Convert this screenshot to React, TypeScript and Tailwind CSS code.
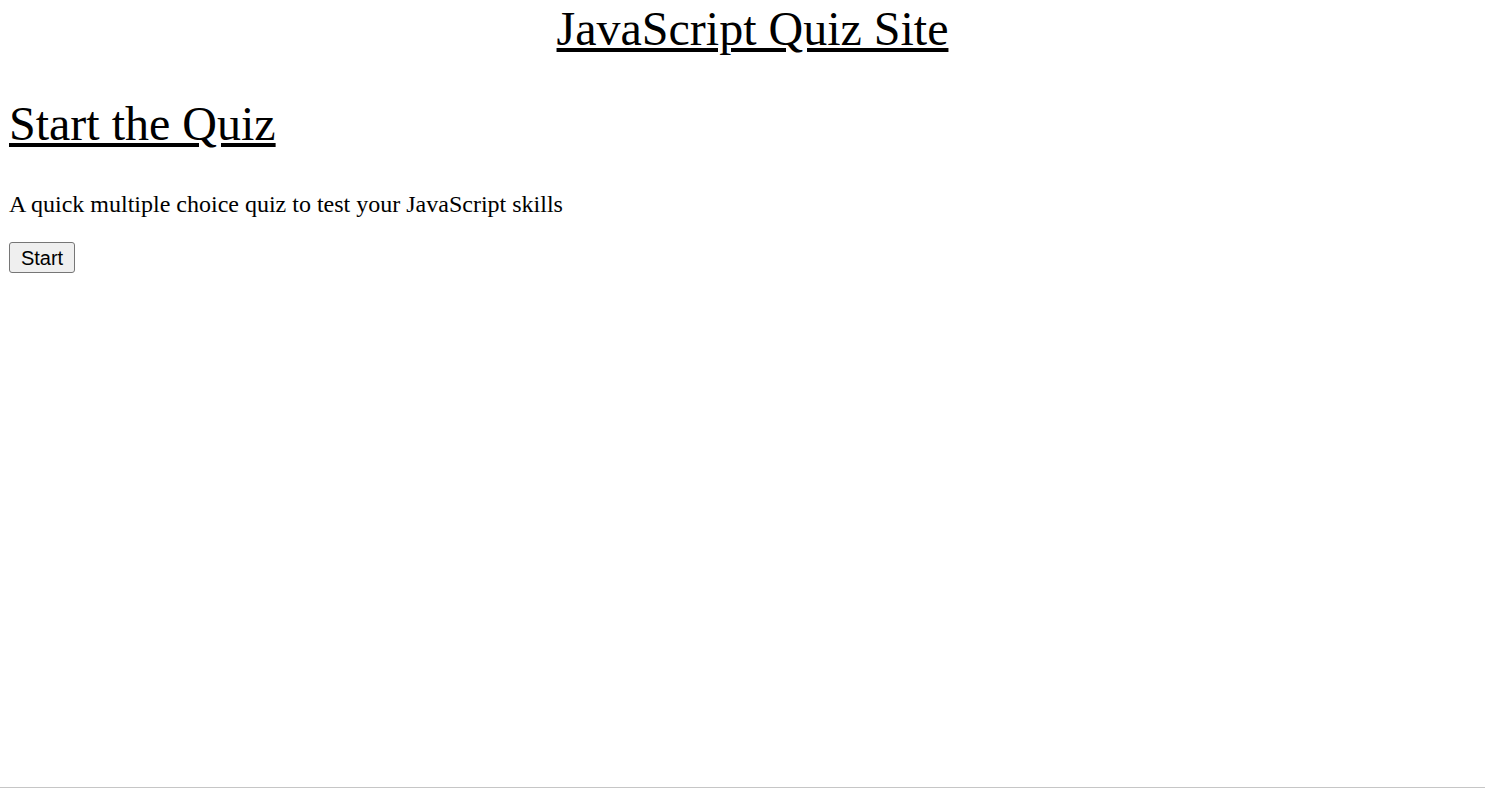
export default function App() {
  return (
    <div className="h-screen border-b border-[#c6c6c6] bg-white px-[9px] font-['Liberation_Serif','Times_New_Roman',serif] text-black">
      <header className="pt-[1px] pl-[20px]">
        <h1 className="text-center text-[48px] leading-[55px] font-normal underline">
          JavaScript Quiz Site
        </h1>
      </header>

      <main>
        <h2 className="mt-[40px] text-[48px] leading-[55px] font-normal underline">
          Start the Quiz
        </h2>
        <p className="mt-[39px] text-[24px] leading-[28px]">
          A quick multiple choice quiz to test your JavaScript skills
        </p>
        <button
          type="button"
          className="mt-[24px] flex h-[31px] w-[66px] items-center justify-center rounded-[3px] border border-[#767676] bg-[#efefef] font-['Liberation_Sans',Arial,sans-serif] text-[20px] leading-none text-black"
        >
          Start
        </button>
      </main>
    </div>
  );
}
